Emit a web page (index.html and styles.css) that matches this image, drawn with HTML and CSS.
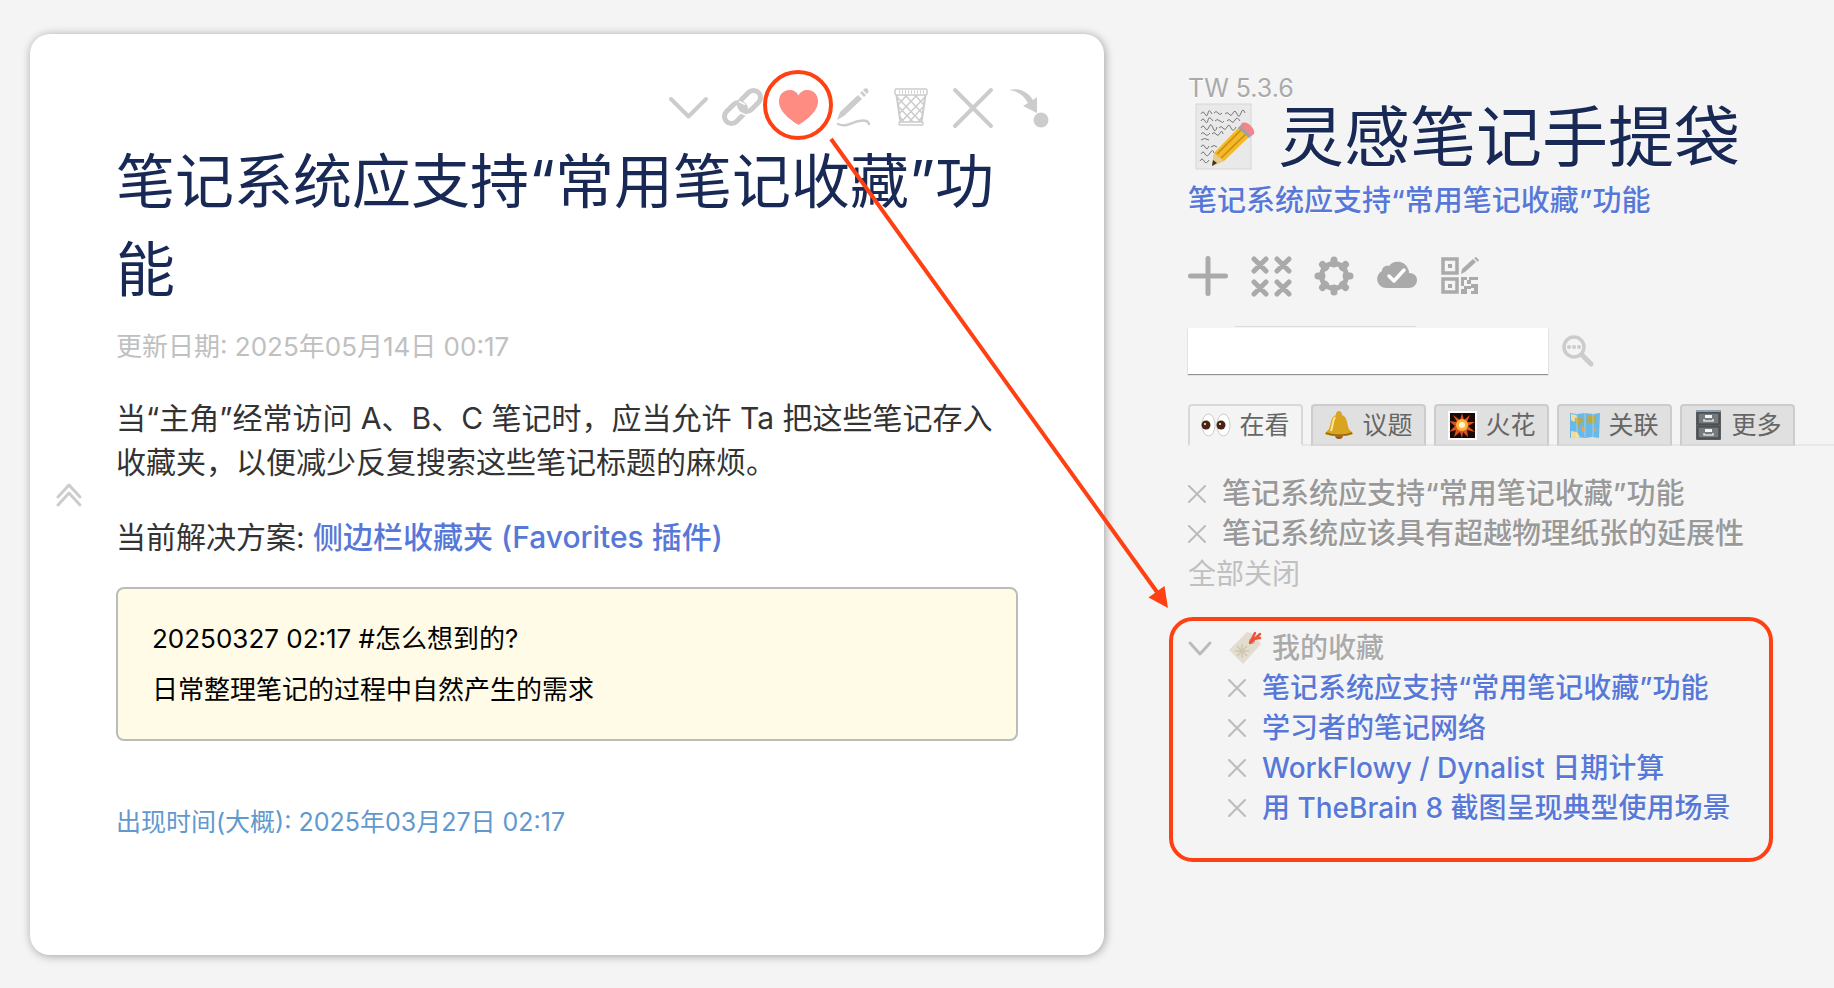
FILE: index.html
```
<!DOCTYPE html>
<html lang="zh-CN">
<head>
    <meta charset="UTF-8">
    <meta name="viewport" content="width=device-width, initial-scale=1.0">
    <title>灵感笔记手提袋</title>
    <link rel="stylesheet" href="styles.css">
</head>
<body>
    <svg class="defs" width="0" height="0" aria-hidden="true">
        <symbol id="icon-close" viewBox="0 0 18 18">
            <path d="M1 1l16 16M17 1L1 17" fill="none" stroke="currentColor" stroke-width="2" stroke-linecap="round"/>
        </symbol>
    </svg>

    <div class="page">
        <main class="tiddler">
            <div class="tiddler-controls">
                <button type="button" aria-label="折叠">
                    <svg viewBox="0 0 40 40"><path d="M4 11l17.500 17.500L39 11" fill="none" stroke="currentColor" stroke-width="4" stroke-linecap="round" stroke-linejoin="round"/></svg>
                </button>
                <button type="button" aria-label="复制链接">
                    <svg viewBox="0 0 40 40">
                        <g fill="none" stroke="currentColor" stroke-width="5">
                            <rect x="-1" y="18" width="24" height="14" rx="7" transform="rotate(-45 11 25)"/>
                            <rect x="14" y="6" width="24" height="14" rx="7" transform="rotate(-45 26 13)"/>
                        </g>
                        <path d="M15 13.500l6 3M17 25l6 2.500" stroke="#fff" stroke-width="1.500"/>
                    </svg>
                </button>
                <button type="button" class="favorite" aria-label="收藏">
                    <svg viewBox="0 0 40 40"><path d="M17.500 37C13 34-2 25-2 13.500C-2 6 3 2 8.500 2c4 0 7.500 2 9 5.500C19 4 22.500 2 26.500 2C32 2 37 6 37 13.500C37 25 22 34 17.500 37z" fill="currentColor"/></svg>
                </button>
                <button type="button" aria-label="编辑">
                    <svg viewBox="0 0 40 40">
                        <path d="M-1 32l3-8L20 7l4 4L6 28zM22 5l2-2 4 4-2 2zM26 1c2-2 6 1 4 4l-1 1-4-4z" fill="currentColor"/>
                        <path d="M0 36c8 4 14-2 21-3c5-1 9 0 10 3" fill="none" stroke="currentColor" stroke-width="2.500" stroke-linecap="round"/>
                    </svg>
                </button>
                <button type="button" aria-label="删除">
                    <svg viewBox="0 0 40 40">
                        <g fill="none" stroke="currentColor" stroke-width="1.500">
                            <rect x="0" y="1" width="32" height="6" rx="1.500"/>
                            <path d="M1.500 7l4 27M30.500 7l-4 27" stroke-width="2"/>
                            <rect x="4" y="34" width="24" height="3" rx="1"/>
                            <path d="M3 17L12 7M4 26L22 7M6 34L30 9M14 34l14-15M23 34l4-5M29 17L20 7M28 26L10 7M26 34L2 9M18 34L4 19M9 34l-4-5"/>
                            <path d="M4 4h25" stroke-dasharray="1 2" stroke-width="3"/>
                        </g>
                    </svg>
                </button>
                <button type="button" aria-label="关闭">
                    <svg viewBox="0 0 40 40"><path d="M3 2l36 36M39 2L3 38" fill="none" stroke="currentColor" stroke-width="4" stroke-linecap="round"/></svg>
                </button>
                <button type="button" aria-label="打开于侧边">
                    <svg viewBox="0 0 40 40">
                        <path d="M0 2C11-1 20 5 24 12l4-3v16l-14-7 5-3C15 8 9 3 0 2z" fill="currentColor"/>
                        <circle cx="32" cy="32" r="7.500" fill="currentColor"/>
                    </svg>
                </button>
            </div>

            <h1 class="tiddler-title">笔记系统应支持“常用笔记收藏”功能</h1>
            <div class="tiddler-date">更新日期: 2025年05月14日 00:17</div>

            <div class="tiddler-body">
                <p>当“主角”经常访问 A、B、C 笔记时，应当允许 Ta 把这些笔记存入收藏夹，以便减少反复搜索这些笔记标题的麻烦。</p>
                <p>当前解决方案: <a href="#">侧边栏收藏夹 (Favorites 插件)</a></p>
                <div class="note">
                    <div>20250327 02:17 #怎么想到的?</div>
                    <div>日常整理笔记的过程中自然产生的需求</div>
                </div>
                <div class="created">出现时间(大概): 2025年03月27日 02:17</div>
            </div>

            <button type="button" class="fold" aria-label="收起">
                <svg viewBox="0 0 26 24"><path d="M2 14L13 2l11 12M2 22l11-12 11 12" fill="none" stroke="currentColor" stroke-width="3" stroke-linecap="round" stroke-linejoin="round"/></svg>
            </button>

            <!-- arrow from the heart to the favorites list -->
            <svg class="arrow" viewBox="0 0 340 472" aria-hidden="true">
                <path d="M2 2L328 455" fill="none" stroke="currentColor" stroke-width="4"/>
                <path d="M339 471L319.500 460.500 335.500 449z" fill="currentColor"/>
            </svg>
        </main>

        <aside class="sidebar">
            <div class="sidebar-head">
                <div class="version">TW 5.3.6</div>
                <h2 class="site-title">
                    <svg class="memo" viewBox="0 0 62 68" aria-hidden="true">
                        <rect x="2" y="1" width="55" height="65" fill="#e9e9e9" stroke="#d6d6d6"/>
                        <path d="M7 11q2-4 4 0t3-1 4 1M20 10q2-3 4 0t4 0M31 11q2-3 4 0t4-1 4 1 4-1 4 0M7 18q2-4 4 0t3-1 5 1M21 18q2-3 5 0t4 0M33 18q2-3 4 0t4-1 5 1M7 25q2-4 4 0t4-1 4 1 4-1M25 25q2-3 4 0t4-1 4 1 5-1M7 31q2-3 4 0t5-1M18 31q2-3 4 0t4-1 3 1M7 37q3-3 8 0M7 44q2-4 4 0t4-1M17 44q3-3 6 0M7 51q2-4 4 0t5-1 4 0M6 58q2-4 4 0t5-1" fill="none" stroke="#777" stroke-width="1"/>
                        <path d="M18 63L20 50L47 22L57 32L30 58z" fill="#f3b926"/>
                        <path d="M23 51L49 25M27 55L54 29" stroke="#c98b10" stroke-width="1.500"/>
                        <path d="M18 63L20 50L30 58z" fill="#e9c98d"/>
                        <path d="M18 63L19 57L23 60z" fill="#333"/>
                        <path d="M44 25L48 21L59 31L55 35z" fill="#9aa3ad"/>
                        <path d="M47 21c4-5 15 4 13 10l-3 2-10-9z" fill="#f0868c"/>
                    </svg>
                    <span>灵感笔记手提袋</span>
                </h2>
                <div class="subtitle"><a href="#">笔记系统应支持“常用笔记收藏”功能</a></div>

                <div class="page-controls">
                    <button type="button" aria-label="新建">
                        <svg viewBox="0 0 40 40"><path d="M20 2.500v35M2.500 20h35" stroke="currentColor" stroke-width="5" stroke-linecap="round"/></svg>
                    </button>
                    <button type="button" aria-label="全部关闭">
                        <svg viewBox="0 0 40 40"><path d="M3 3l12 12M15 3L3 15M26 3l12 12M38 3L26 15M3 26l12 12M15 26L3 38M26 26l12 12M38 26L26 38" stroke="currentColor" stroke-width="5" stroke-linecap="round"/></svg>
                    </button>
                    <button type="button" aria-label="控制台">
                        <svg viewBox="0 0 40 40">
                            <circle cx="20" cy="20" r="12.500" fill="none" stroke="currentColor" stroke-width="5"/>
                            <path d="M20 4v4M20 32v4M4 20h4M32 20h4M8.500 8.500l3 3M28.500 28.500l3 3M8.500 31.500l3-3M28.500 11.500l3-3" stroke="currentColor" stroke-width="7" stroke-linecap="round"/>
                        </svg>
                    </button>
                    <button type="button" aria-label="保存">
                        <svg viewBox="0 0 40 40">
                            <path d="M9 32a9 9 0 0 1-4-17C5 10 10 9 12 10C16 4 28 4 31 13c1 1 1 3 1 4c5 0 8 3 8 7s-3 8-8 8z" fill="currentColor"/>
                            <path d="M12 20l5 5L27 14" fill="none" stroke="#fff" stroke-width="3.500" stroke-linecap="round" stroke-linejoin="round"/>
                        </svg>
                    </button>
                    <button type="button" aria-label="二维码">
                        <svg viewBox="0 0 40 40">
                            <path d="M3 3h14v14H3zM3 23h14v13H3z" fill="none" stroke="currentColor" stroke-width="3.500"/>
                            <path d="M8 8h4v4H8zM8 28h4v4H8zM21 18l1-5L33 3l3 3L25 16zM34 2l2-1 3 3-1 2zM21 21h6v3h-3v6h-3zM29 21h9v3h-9zM27 24h4v4h-4zM31 28h7v10h-7v-3h3v-3h-3zM24 30h7v3h-4v5h-3v-2h-3v-3h3zM21 35h3v3h-3z" fill="currentColor"/>
                        </svg>
                    </button>
                </div>

                <div class="search">
                    <input type="search" aria-label="搜索">
                    <button type="button" aria-label="高级搜索">
                        <svg viewBox="0 0 32 32">
                            <circle cx="12" cy="12" r="10" fill="none" stroke="currentColor" stroke-width="3.500"/>
                            <path d="M20 20l9 9" stroke="currentColor" stroke-width="5" stroke-linecap="round"/>
                            <path d="M7 12h.1M12 12h.1M17 12h.1" stroke="currentColor" stroke-width="4" stroke-linecap="round"/>
                        </svg>
                    </button>
                </div>
            </div>

            <div class="tabs">
                <button type="button" class="tab selected">
                    <svg viewBox="0 0 30 36" aria-hidden="true">
                        <g fill="#fff" stroke="#ccc"><ellipse cx="7.500" cy="18" rx="6.500" ry="11"/><ellipse cx="22.500" cy="18" rx="6.500" ry="11"/></g>
                        <circle cx="5" cy="18" r="4.500" fill="#4a2412"/><circle cx="20" cy="18" r="4.500" fill="#4a2412"/>
                        <circle cx="4" cy="17" r="1" fill="#fff"/><circle cx="19" cy="17" r="1" fill="#fff"/>
                    </svg>
                    在看
                </button>
                <button type="button" class="tab">
                    <svg viewBox="0 0 30 36" aria-hidden="true">
                        <circle cx="15" cy="28" r="4" fill="#9b5416"/>
                        <path d="M15 4c3 0 3 3 3 4c6 2 5 11 7 14c1 2 4 3 4 5c-4 3-24 3-28 0c0-2 3-3 4-5c2-3 1-12 7-14c0-1 0-4 3-4z" fill="#d9a520"/>
                        <path d="M11 10c-3 5-2 9-4 14" fill="none" stroke="#ffe98a" stroke-width="2"/>
                        <path d="M2 26c7 3 19 3 26 0" fill="none" stroke="#93680e" stroke-width="1.500"/>
                    </svg>
                    议题
                </button>
                <button type="button" class="tab">
                    <svg viewBox="0 0 30 36" aria-hidden="true">
                        <rect x="2" y="5" width="27" height="27" fill="#1a0a03" stroke="#fff" stroke-width="2"/>
                        <path d="M15 6l2 7 6-5-3 7 8 0-7 4 7 6-8-2 1 7-5-5-1 6-2-6-6 5 2-7-7 2 6-6-6-5 8 1-4-7 7 5z" fill="#d9541a"/>
                        <circle cx="15" cy="18" r="6" fill="#ffb23c"/><circle cx="15" cy="18" r="3" fill="#fff6d0"/>
                    </svg>
                    火花
                </button>
                <button type="button" class="tab">
                    <svg viewBox="0 0 30 36" aria-hidden="true">
                        <path d="M0 6l7 1 8-1 8 1 7-1-1 25-7-1-7 1-8-1-7 1z" fill="#68b8e8"/>
                        <path d="M1 7l5 1 1 3-3 4-3-2zM1 24l6 1 3 5-9 1z" fill="#f3dc9a"/>
                        <path d="M5 11l7 0 2 3-4 3-1 4-3-5zM17 9l8 0 1 6-4 2-3-2-3 1z" fill="#b8a94c"/>
                        <path d="M12 19l3 2-1 5-2-2zM23 21l4 1-2 3z" fill="#e9a253"/>
                        <path d="M7 7v23M15 6v24M23 7v23" stroke="#fff" stroke-opacity=".35"/>
                    </svg>
                    关联
                </button>
                <button type="button" class="tab">
                    <svg viewBox="0 0 30 36" aria-hidden="true">
                        <rect x="3" y="3" width="25" height="30" rx="1" fill="#5a5d60"/>
                        <path d="M3 4h25" stroke="#8da0ad" stroke-width="2"/>
                        <path d="M5 6h21v11H5zM5 20h21v11H5z" fill="#777a7c" stroke="#3f4143"/>
                        <path d="M12 8h7v3h-7zM12 22h7v3h-7z" fill="#f4f4f4"/>
                        <path d="M11 12v2h9v-2M11 26v2h9v-2" fill="none" stroke="#ddd" stroke-width="1.500"/>
                    </svg>
                    更多
                </button>
            </div>

            <div class="open-list">
                <div class="row">
                    <button type="button" class="close" aria-label="关闭"><svg><use href="#icon-close"/></svg></button>
                    <a href="#">笔记系统应支持“常用笔记收藏”功能</a>
                </div>
                <div class="row">
                    <button type="button" class="close" aria-label="关闭"><svg><use href="#icon-close"/></svg></button>
                    <a href="#">笔记系统应该具有超越物理纸张的延展性</a>
                </div>
                <button type="button" class="close-all">全部关闭</button>
            </div>

            <section class="favorites">
                <div class="row favorites-head">
                    <button type="button" class="toggle" aria-label="展开">
                        <svg viewBox="0 0 24 18"><path d="M2 4l10 11L22 4" fill="none" stroke="currentColor" stroke-width="3" stroke-linecap="round" stroke-linejoin="round"/></svg>
                    </button>
                    <span class="favorites-title">
                        <svg class="bookmark" viewBox="0 0 34 34" aria-hidden="true">
                            <path d="M19 1l7 2 7 10-18 20L1 19z" fill="#e3ddd0"/>
                            <path d="M14 13v14M7 20h14M9 15l10 10M19 15L9 25" stroke="#cfc6b1" stroke-width="1.500"/>
                            <circle cx="24" cy="10" r="3" fill="#b9ada0"/>
                            <path d="M22 12l5-10M22 12l10-9M25 8l7-1" stroke="#ef5138" stroke-width="2.500" stroke-linecap="round"/>
                        </svg>
                        我的收藏
                    </span>
                </div>
                <div class="row item">
                    <button type="button" class="close" aria-label="移除"><svg><use href="#icon-close"/></svg></button>
                    <a href="#">笔记系统应支持“常用笔记收藏”功能</a>
                </div>
                <div class="row item">
                    <button type="button" class="close" aria-label="移除"><svg><use href="#icon-close"/></svg></button>
                    <a href="#">学习者的笔记网络</a>
                </div>
                <div class="row item">
                    <button type="button" class="close" aria-label="移除"><svg><use href="#icon-close"/></svg></button>
                    <a href="#">WorkFlowy / Dynalist 日期计算</a>
                </div>
                <div class="row item">
                    <button type="button" class="close" aria-label="移除"><svg><use href="#icon-close"/></svg></button>
                    <a href="#">用 TheBrain 8 截图呈现典型使用场景</a>
                </div>
            </section>
        </aside>
    </div>
</body>
</html>
```
FILE: styles.css
```
:root {
    --page-background: #f4f4f4;
    --title: #182955;
    --link: #5778d8;
    --muted: #c0c0c0;
    --icon: #cccccc;
    --mark: #ff4013;
}

*,
*::before,
*::after {
    box-sizing: border-box;
}

body {
    margin: 0;
    background-color: var(--page-background);
    font-family: Inter, "Noto Sans CJK SC", sans-serif;
    color: #333333;
}

h1, h2, p {
    margin: 0;
    font-weight: normal;
}

a {
    color: var(--link);
    text-decoration: none;
    font-weight: 500;
}

button {
    padding: 0;
    border: none;
    background: none;
    color: inherit;
    font: inherit;
    cursor: pointer;
}

svg {
    display: block;
    overflow: visible;
}

.defs {
    position: absolute;
}

.page {
    display: flex;
    align-items: flex-start;
    padding: 34px 0 33px 30px;
}

/* note */
.tiddler {
    position: relative;
    flex: 1;
    min-width: 0;
    padding: 54px 86px 115px;
    background-color: #ffffff;
    border-radius: 20px;
    box-shadow: 1px 1px 10px rgba(0, 0, 0, 0.35);
}

.tiddler-controls {
    display: flex;
    justify-content: flex-end;
    gap: 17px;
    margin-right: -31px;
    color: var(--icon);
}

.tiddler-controls svg {
    width: 40px;
    height: 40px;
}

.favorite {
    position: relative;
    color: #ff8c82;
}

.favorite::after {
    content: "";
    position: absolute;
    top: -18px;
    left: -18px;
    width: 70px;
    height: 70px;
    border: 4px solid var(--mark);
    border-radius: 50%;
}

.tiddler-title {
    margin-top: 10px;
    font-size: 59px;
    line-height: 88px;
    color: var(--title);
}

.tiddler-date {
    margin-top: 15px;
    font-size: 26px;
    line-height: 36px;
    color: var(--muted);
}

.tiddler-body p {
    margin-top: 31px;
    font-size: 30px;
    line-height: 44px;
}

.note {
    margin-top: 28px;
    padding: 24px 34px;
    border: 2px solid #bbbbbb;
    border-radius: 8px;
    background-color: #fffbe7;
    color: #000000;
    font-size: 26px;
    line-height: 51px;
}

.created {
    margin-top: 63px;
    font-size: 25px;
    line-height: 36px;
    color: #6199ce;
}

.fold {
    position: absolute;
    left: 26px;
    top: 449px;
    color: var(--icon);
}

.fold svg {
    width: 26px;
    height: 24px;
}

.arrow {
    position: absolute;
    top: 103px;
    right: -65px;
    width: 340px;
    height: 472px;
    color: var(--mark);
    pointer-events: none;
}

/* sidebar */
.sidebar {
    width: 730px;
    padding: 39px 0 0 65px;
    font-size: 28px;
    line-height: 40px;
    color: #aaaaaa;
    text-shadow: 0 1px 0 #ffffff;
}

.sidebar-head,
.tabs,
.open-list {
    padding-left: 19px;
}

.version {
    font-size: 25px;
    line-height: 30px;
}

.site-title {
    display: flex;
    align-items: center;
    gap: 22px;
    padding-left: 6px;
    font-size: 66px;
    line-height: 68px;
    color: var(--title);
}

.memo {
    width: 62px;
    height: 68px;
}

.subtitle {
    margin-top: 10px;
    font-size: 29px;
}

.page-controls {
    display: flex;
    gap: 23px;
    margin-top: 35px;
}

.page-controls svg {
    width: 40px;
    height: 40px;
}

.search {
    position: relative;
    display: flex;
    align-items: center;
    gap: 14px;
    margin-top: 32px;
    color: var(--icon);
}

.search::before {
    content: "";
    position: absolute;
    top: -2px;
    left: 47px;
    width: 181px;
    height: 1px;
    background-color: #dddddd;
}

.search input {
    width: 360px;
    height: 46px;
    padding: 0 8px;
    border: none;
    background-color: #ffffff;
    box-shadow: 0 1px 1px rgba(0, 0, 0, 0.4);
    font: inherit;
    outline: none;
}

.search svg {
    width: 32px;
    height: 32px;
}

.tabs {
    display: flex;
    gap: 8px;
    margin-top: 30px;
    background: linear-gradient(#e8e8e8, #e8e8e8) right bottom / 606px 2px no-repeat;
}

.tab {
    display: flex;
    align-items: center;
    justify-content: center;
    gap: 8px;
    width: 115px;
    height: 42px;
    border: 2px solid #cccccc;
    border-bottom-color: #d8d8d8;
    border-radius: 4px 4px 0 0;
    background-color: #e0e0e0;
    color: #666666;
    font-size: 25px;
    line-height: 36px;
    text-shadow: none;
    white-space: nowrap;
}

.tab svg {
    width: 30px;
    height: 36px;
}

.tab.selected {
    border-color: #d8d8d8;
    border-bottom-color: var(--page-background);
    background-color: var(--page-background);
}

.open-list {
    margin-top: 28px;
}

.row {
    display: flex;
    align-items: center;
    gap: 16px;
    white-space: nowrap;
}

.close {
    color: #bbbbbb;
}

.close svg {
    width: 18px;
    height: 18px;
}

.open-list a {
    color: #999999;
    font-size: 29px;
}

.close-all {
    display: block;
    color: var(--muted);
    line-height: 40px;
}

.favorites {
    width: 604px;
    margin-top: 23px;
    padding: 7px 15px 30px;
    border: 4px solid var(--mark);
    border-radius: 24px;
}

.favorites-title {
    display: flex;
    align-items: center;
    gap: 10px;
    font-weight: 500;
}

.favorites .item {
    padding-left: 40px;
}

.toggle {
    color: #bbbbbb;
}

.toggle svg {
    width: 24px;
    height: 18px;
}

.bookmark {
    width: 34px;
    height: 34px;
}
```
